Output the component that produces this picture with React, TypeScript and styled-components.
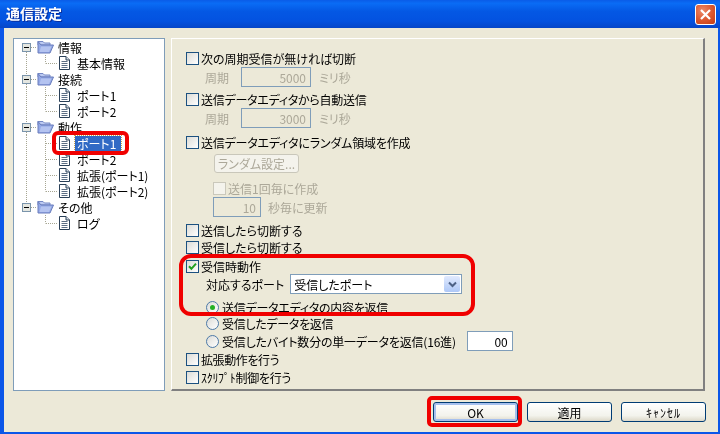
import React from "react";
import styled, { createGlobalStyle } from "styled-components";

const GlobalStyle = createGlobalStyle`
  html, body {
    margin: 0;
    padding: 0;
    background: #ece9d8;
  }
  * {
    box-sizing: border-box;
  }
`;

const Dialog = styled.div`
  position: relative;
  width: 720px;
  height: 434px;
  display: flex;
  flex-direction: column;
  overflow: hidden;
  background: #0b56e8;
  font-family: "Noto Sans CJK JP", "Liberation Sans", sans-serif;
  font-size: 12px;
  font-feature-settings: "palt";
  color: #000;
  filter: blur(0.4px);
`;

const TitleBar = styled.div`
  height: 28px;
  flex: none;
  display: flex;
  align-items: center;
  justify-content: space-between;
  padding: 0 4px 0 6px;
  background: linear-gradient(
    to bottom,
    #0a5ce8 0%,
    #0a6cf5 12%,
    #0458e4 40%,
    #0352e0 75%,
    #0646c8 100%
  );
`;

const Title = styled.div`
  margin-bottom: 2px;
  color: #fff;
  font-size: 14px;
  font-weight: 700;
  text-shadow: 1px 1px 0 #0b2f9c;
`;

const CloseButton = styled.div`
  width: 21px;
  height: 21px;
  display: flex;
  align-items: center;
  justify-content: center;
  border: 1px solid #fff;
  border-radius: 3px;
  background: radial-gradient(circle at 35% 30%, #ec8a6a 0%, #dc5a32 50%, #c23c12 100%);
`;

const Client = styled.div`
  flex: 1;
  margin: 0 2px 2px 4px;
  display: flex;
  flex-direction: column;
  background: #ece9d8;
`;

const Body = styled.div`
  display: flex;
  gap: 6px;
  padding: 10px 0 0 9px;
`;

const TreePanel = styled.div`
  width: 152px;
  height: 353px;
  background: #fff;
  border: 1px solid #7f9db9;
`;

const TreeRow = styled.div`
  height: 16px;
  display: flex;
  align-items: center;
  white-space: nowrap;
`;

const NodeLabel = styled.span<{ $selected?: boolean; $leaf?: boolean }>`
  margin-left: ${(p) => (p.$selected ? "4px" : p.$leaf ? "6px" : "4px")};
  padding: 0 ${(p) => (p.$selected ? "5px 0 2px" : "0")};
  line-height: 15px;
  background: ${(p) => (p.$selected ? "#316ac5" : "transparent")};
  color: ${(p) => (p.$selected ? "#fff" : "#000")};
  outline: ${(p) => (p.$selected ? "1px dotted #c9a24a" : "none")};
`;

const OptionsPanel = styled.div`
  width: 534px;
  height: 353px;
  padding: 11px 0 0 14px;
  display: flex;
  flex-direction: column;
  border-style: solid;
  border-width: 1px 2px 2px 1px;
  border-color: #fff #808080 #808080 #fff;
`;

const Row = styled.div<{ $top?: number; $h?: number; $indent?: number }>`
  flex: none;
  height: ${(p) => p.$h ?? 16}px;
  margin-top: ${(p) => p.$top ?? 0}px;
  margin-left: ${(p) => p.$indent ?? 0}px;
  display: flex;
  align-items: center;
  white-space: nowrap;
`;

const Box = styled.span<{ $disabled?: boolean }>`
  flex: none;
  width: 13px;
  height: 13px;
  margin-right: 2px;
  display: flex;
  align-items: center;
  justify-content: center;
  border: 1px solid ${(p) => (p.$disabled ? "#cac8bb" : "#1c5180")};
  background: ${(p) =>
    p.$disabled ? "#f4f3ec" : "linear-gradient(135deg, #dcdcd7 0%, #ffffff 100%)"};
`;

const RadioDot = styled.span`
  flex: none;
  width: 13px;
  height: 13px;
  margin-right: 3px;
  display: flex;
  align-items: center;
  justify-content: center;
  border: 1px solid #4d7aa8;
  border-radius: 50%;
  background: linear-gradient(135deg, #dcdcd7 0%, #ffffff 100%);
`;

const RadioMark = styled.span`
  width: 5px;
  height: 5px;
  border-radius: 50%;
  background: #24b024;
`;

const Text = styled.span<{ $disabled?: boolean; $left?: number; $track?: number }>`
  margin-left: ${(p) => p.$left ?? 0}px;
  letter-spacing: ${(p) => p.$track ?? 0}px;
  color: ${(p) => (p.$disabled ? "#aca899" : "#000")};
`;

const NumberField = styled.span<{ $w: number; $left?: number; $disabled?: boolean }>`
  width: ${(p) => p.$w}px;
  height: 20px;
  margin-left: ${(p) => p.$left ?? 0}px;
  padding-right: 4px;
  display: flex;
  align-items: center;
  justify-content: flex-end;
  border: 1px solid #7f9db9;
  background: ${(p) => (p.$disabled ? "#ece9d8" : "#fff")};
  color: ${(p) => (p.$disabled ? "#aca899" : "#000")};
`;

const GhostButton = styled.span`
  width: 85px;
  height: 19px;
  display: flex;
  align-items: center;
  justify-content: center;
  border: 1px solid #c9c7ba;
  border-radius: 3px;
  color: #aca899;
  background: #f4f3ec;
`;

const Select = styled.span`
  width: 172px;
  height: 20px;
  margin-left: 6px;
  padding: 0 1px 0 3px;
  display: flex;
  align-items: center;
  justify-content: space-between;
  border: 1px solid #7f9db9;
  background: #fff;
`;

const SelectArrow = styled.span`
  width: 16px;
  height: 16px;
  display: flex;
  align-items: center;
  justify-content: center;
  border-radius: 2px;
  background: linear-gradient(to bottom, #e1eafe, #aec8f7);
`;

const Footer = styled.div`
  flex: 1;
  display: flex;
  gap: 9px;
  justify-content: flex-end;
  padding: 11px 12px 0 0;
`;

const PushButton = styled.div<{ $default?: boolean; $track?: number }>`
  width: 85px;
  height: 20px;
  display: flex;
  align-items: center;
  justify-content: center;
  letter-spacing: ${(p) => p.$track ?? 0}px;
  border: 1px solid #003c74;
  border-radius: 3px;
  background: linear-gradient(to bottom, #ffffff 0%, #f3f3ec 70%, #dcd8c8 100%);
  box-shadow: ${(p) => (p.$default ? "inset 0 0 0 2px #a6c0ee" : "none")};
`;

const Highlight = styled.div<{ $x: number; $y: number; $w: number; $h: number; $r: number }>`
  position: absolute;
  left: ${(p) => p.$x}px;
  top: ${(p) => p.$y}px;
  width: ${(p) => p.$w}px;
  height: ${(p) => p.$h}px;
  border: 4px solid #f00000;
  border-radius: ${(p) => p.$r}px;
  pointer-events: none;
`;

const CheckMark = () => (
  <svg width="9" height="9" viewBox="0 0 9 9">
    <path d="M1 4.2 L3.4 6.8 L8 1.6" fill="none" stroke="#21a121" strokeWidth="2" />
  </svg>
);

const Minus = () => (
  <g>
    <rect x="8.5" y="4.5" width="8" height="8" fill="#e4e6e0" stroke="#7a94ab" />
    <path d="M10 8.5 H15" stroke="#000" />
  </g>
);

const Folder = () => (
  <svg width="17" height="14" viewBox="0 0 17 14">
    <path d="M1 1.5 H6 L7.5 3 H13 V5 H1 Z" fill="#bccaf2" stroke="#7588c4" />
    <path d="M1 13 L1 1.5 L4 5 H16.5 L13 13 Z" fill="#93a8e6" stroke="#6a7dbc" />
    <path d="M4 6.5 H14.5 L12 12 H2.5 Z" fill="#b4c3f0" />
  </svg>
);

const Doc = () => (
  <svg width="13" height="16" viewBox="0 0 13 16">
    <path d="M1.5 1.5 H8 L11.5 5 V14.5 H1.5 Z" fill="#fff" stroke="#2a4058" />
    <path d="M8 1.5 V5 H11.5" fill="#d5dbe3" stroke="#2a4058" />
    <path d="M3.5 6.5 H9.5 M3.5 8.5 H9.5 M3.5 10.5 H9.5 M3.5 12.5 H9.5" stroke="#5c6e84" />
  </svg>
);

const dotted = { stroke: "#a7a692", strokeDasharray: "1 1" };

const RootNode = ({ label, first, last }: { label: string; first?: boolean; last?: boolean }) => (
  <TreeRow>
    <svg width="23" height="16" viewBox="0 0 23 16">
      {!first && <path d="M12.5 0 V4" {...dotted} />}
      {!last && <path d="M12.5 13 V16" {...dotted} />}
      <path d="M17 8.5 H23" {...dotted} />
      <Minus />
    </svg>
    <Folder />
    <NodeLabel>{label}</NodeLabel>
  </TreeRow>
);

const LeafNode = ({
  label,
  trunk,
  lastChild,
  selected,
}: {
  label: string;
  trunk?: boolean;
  lastChild?: boolean;
  selected?: boolean;
}) => (
  <TreeRow>
    <svg width="44" height="16" viewBox="0 0 44 16">
      {trunk && <path d="M12.5 0 V16" {...dotted} />}
      <path d={lastChild ? "M31.5 0 V8.5" : "M31.5 0 V16"} {...dotted} />
      <path d="M32 8.5 H44" {...dotted} />
    </svg>
    <Doc />
    <NodeLabel $leaf $selected={selected}>
      {label}
    </NodeLabel>
  </TreeRow>
);

const CheckRow = ({
  label,
  top,
  checked,
  disabled,
  indent,
  track,
}: {
  label: string;
  top?: number;
  checked?: boolean;
  disabled?: boolean;
  indent?: number;
  track?: number;
}) => (
  <Row $top={top} $indent={indent}>
    <Box $disabled={disabled}>{checked && <CheckMark />}</Box>
    <Text $disabled={disabled} $track={track}>
      {label}
    </Text>
  </Row>
);

const PeriodRow = ({ value, top }: { value: string; top: number }) => (
  <Row $top={top} $h={20} $indent={19}>
    <Text $disabled>周期</Text>
    <NumberField $w={70} $left={12} $disabled>
      {value}
    </NumberField>
    <Text $disabled $left={8}>
      ミリ秒
    </Text>
  </Row>
);

const RadioRow = ({
  label,
  top,
  selected,
  h,
  track,
  children,
}: {
  label: string;
  top: number;
  selected?: boolean;
  h?: number;
  track?: number;
  children?: React.ReactNode;
}) => (
  <Row $top={top} $h={h ?? 14} $indent={20}>
    <RadioDot>{selected && <RadioMark />}</RadioDot>
    <Text $track={track}>{label}</Text>
    {children}
  </Row>
);

export default function App() {
  return (
    <>
      <GlobalStyle />
      <Dialog>
        <TitleBar>
          <Title>通信設定</Title>
          <CloseButton>
            <svg width="13" height="13" viewBox="0 0 13 13">
              <path d="M2 2 L11 11 M11 2 L2 11" stroke="#fff" strokeWidth="2.2" />
            </svg>
          </CloseButton>
        </TitleBar>
        <Client>
          <Body>
            <TreePanel>
              <RootNode label="情報" first />
              <LeafNode label="基本情報" trunk lastChild />
              <RootNode label="接続" />
              <LeafNode label="ポート1" trunk />
              <LeafNode label="ポート2" trunk lastChild />
              <RootNode label="動作" />
              <LeafNode label="ポート1" trunk selected />
              <LeafNode label="ポート2" trunk />
              <LeafNode label="拡張(ポート1)" trunk />
              <LeafNode label="拡張(ポート2)" trunk lastChild />
              <RootNode label="その他" last />
              <LeafNode label="ログ" lastChild />
            </TreePanel>
            <OptionsPanel>
              <CheckRow label="次の周期受信が無ければ切断" />
              <PeriodRow value="5000" top={1} />
              <CheckRow label="送信データエディタから自動送信" top={4} track={-0.25} />
              <PeriodRow value="3000" top={1} />
              <CheckRow label="送信データエディタにランダム領域を作成" top={6} track={-0.2} />
              <Row $top={4} $h={19} $indent={28}>
                <GhostButton>ランダム設定...</GhostButton>
              </Row>
              <CheckRow label="送信1回毎に作成" top={7} disabled indent={27} />
              <Row $top={1} $h={20} $indent={27}>
                <NumberField $w={48} $disabled>
                  10
                </NumberField>
                <Text $disabled $left={7}>
                  秒毎に更新
                </Text>
              </Row>
              <CheckRow label="送信したら切断する" top={5} />
              <CheckRow label="受信したら切断する" top={1} />
              <CheckRow label="受信時動作" top={3} checked />
              <Row $h={20} $indent={20}>
                <Text>対応するポート</Text>
                <Select>
                  受信したポート
                  <SelectArrow>
                    <svg width="9" height="7" viewBox="0 0 9 7">
                      <path d="M1 1.5 L4.5 5 L8 1.5" fill="none" stroke="#4d6185" strokeWidth="2" />
                    </svg>
                  </SelectArrow>
                </Select>
              </Row>
              <RadioRow label="送信データエディタの内容を返信" top={6} selected track={-0.25} />
              <RadioRow label="受信したデータを返信" top={2} track={-0.3} />
              <RadioRow
                label="受信したバイト数分の単一データを返信(16進)"
                top={1}
                h={20}
                track={-0.2}
              >
                <NumberField $w={46} $left={11}>
                  00
                </NumberField>
              </RadioRow>
              <CheckRow label="拡張動作を行う" track={-0.4} />
              <CheckRow label="ｽｸﾘﾌﾟﾄ制御を行う" top={2} track={-0.3} />
            </OptionsPanel>
          </Body>
          <Footer>
            <PushButton $default>OK</PushButton>
            <PushButton>適用</PushButton>
            <PushButton $track={1}>ｷｬﾝｾﾙ</PushButton>
          </Footer>
        </Client>
        <Highlight $x={52} $y={131} $w={77} $h={24} $r={6} />
        <Highlight $x={179} $y={254} $w={296} $h={62} $r={12} />
        <Highlight $x={427} $y={396} $w={95} $h={31} $r={5} />
      </Dialog>
    </>
  );
}
